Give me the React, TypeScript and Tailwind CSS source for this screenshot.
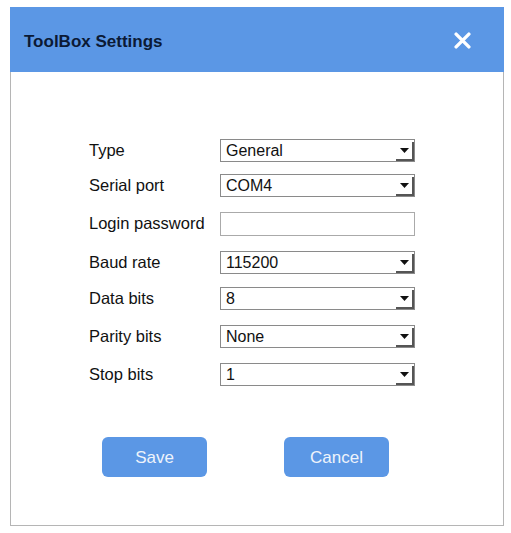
import React from "react";

const FONT = { fontFamily: '"Liberation Sans", Arial, sans-serif' };

function Select({ value }: { value: string }) {
  return (
    <div className="relative flex h-[23px] w-[195px] items-center border border-[#8a8a8a] bg-white pl-[5px] text-[16px] text-[#111]">
      <span>{value}</span>
      <div className="absolute right-0 bottom-0 flex h-[19px] w-[18px] items-center justify-center border-r-2 border-b-2 border-[#555]">
        <svg width="9" height="5" viewBox="0 0 9 5">
          <path d="M0 0 H9 L4.5 5 Z" fill="#111" />
        </svg>
      </div>
    </div>
  );
}

function Field({ label, children, mt }: { label: string; children: React.ReactNode; mt: string }) {
  return (
    <div className={`flex h-[23px] items-center ${mt}`}>
      <div className="w-[131px] text-[16.5px] leading-[23px] text-[#111]">{label}</div>
      {children}
    </div>
  );
}

export default function App() {
  return (
    <div className="h-[533px] w-[511px] bg-white pt-[7px] pl-[10px]" style={FONT}>
      <div className="flex h-[519px] w-[494px] flex-col">
        <div className="flex h-[65px] items-center justify-between bg-[#5b97e5] pt-[4px] pr-[33px] pl-[14px]">
          <span className="text-[17px] font-bold text-[#0b1a35]">ToolBox Settings</span>
          <svg width="17" height="17" viewBox="0 0 16 16" className="-mt-[3px]">
            <path d="M2 2 L14 14 M14 2 L2 14" stroke="#fff" strokeWidth="3.2" strokeLinecap="round" />
          </svg>
        </div>
        <div className="flex flex-1 flex-col border-x border-b border-[#b5b5b5] pl-[78px]">
          <div className="mt-[67px]">
            <Field label="Type" mt="mt-0">
              <Select value="General" />
            </Field>
            <Field label="Serial port" mt="mt-[12px]">
              <Select value="COM4" />
            </Field>
            <Field label="Login password" mt="mt-[15px]">
              <div className="h-[24px] w-[195px] border border-[#aaa] bg-white" />
            </Field>
            <Field label="Baud rate" mt="mt-[16px]">
              <Select value="115200" />
            </Field>
            <Field label="Data bits" mt="mt-[13px]">
              <Select value="8" />
            </Field>
            <Field label="Parity bits" mt="mt-[15px]">
              <Select value="None" />
            </Field>
            <Field label="Stop bits" mt="mt-[15px]">
              <Select value="1" />
            </Field>
          </div>
          <div className="mt-[51px] flex gap-[77px] pl-[13px]">
            <button className="h-[40px] w-[105px] rounded-md bg-[#5b97e5] pt-[2px] text-[17px] text-[#eef3fb]">Save</button>
            <button className="h-[40px] w-[105px] rounded-md bg-[#5b97e5] pt-[2px] text-[17px] text-[#eef3fb]">Cancel</button>
          </div>
        </div>
      </div>
    </div>
  );
}
